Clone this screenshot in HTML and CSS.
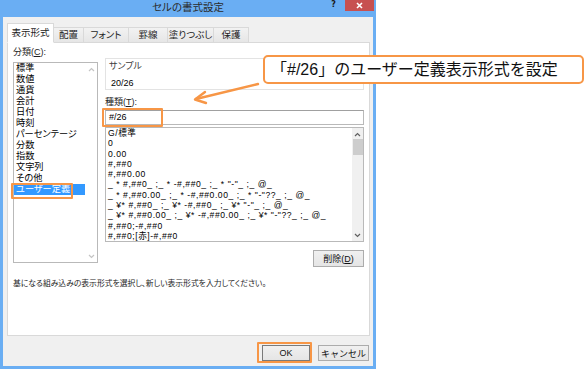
FILE: index.html
```html
<!DOCTYPE html>
<html lang="ja">
<head>
    <meta charset="UTF-8">
    <title>セルの書式設定</title>
    <link rel="stylesheet" href="styles.css">
</head>
<body>
    <div class="stage">
        <div class="window">
            <div class="titlebar">
                <span></span>
                <span class="title">セルの書式設定</span>
                <div class="controls">
                    <span class="help">?</span>
                    <span class="close">
                        <svg width="7" height="7" viewBox="0 0 7 7"><path d="M1 1L6 6M6 1L1 6" stroke="#fff" stroke-width="1.6"/></svg>
                    </span>
                </div>
            </div>

            <div class="client">
                <div class="tabs">
                    <div class="tab active">表示形式</div>
                    <div class="tab w-haichi">配置</div>
                    <div class="tab w-font">フォント</div>
                    <div class="tab w-keisen">罫線</div>
                    <div class="tab w-nuri">塗りつぶし</div>
                    <div class="tab w-hogo">保護</div>
                </div>

                <div class="panel">
                    <div class="cols">
                        <div class="left">
                            <div class="label">分類(<u>C</u>):</div>
                            <div class="listbox category">
                                <ul class="items">
                                    <li>標準</li>
                                    <li>数値</li>
                                    <li>通貨</li>
                                    <li>会計</li>
                                    <li>日付</li>
                                    <li>時刻</li>
                                    <li>パーセンテージ</li>
                                    <li>分数</li>
                                    <li>指数</li>
                                    <li>文字列</li>
                                    <li>その他</li>
                                    <li class="selected">ユーザー定義</li>
                                </ul>
                                <div class="vscroll disabled">
                                    <svg width="7" height="5" viewBox="0 0 7 5"><path d="M1 4L3.5 1.5L6 4" fill="none" stroke="#c4c4c4" stroke-width="1.2"/></svg>
                                    <svg width="7" height="5" viewBox="0 0 7 5"><path d="M1 1L3.5 3.5L6 1" fill="none" stroke="#c4c4c4" stroke-width="1.2"/></svg>
                                </div>
                            </div>
                        </div>

                        <div class="right">
                            <div class="sample">
                                <div class="sample-title">サンプル</div>
                                <div class="sample-value">20/26</div>
                            </div>
                            <div class="label">種類(<u>T</u>):</div>
                            <div class="textbox">#/26</div>
                            <div class="listbox formats">
                                <ul class="items">
                                    <li>G/標準</li>
                                    <li>0</li>
                                    <li>0.00</li>
                                    <li>#,##0</li>
                                    <li>#,##0.00</li>
                                    <li>_ * #,##0_ ;_ * -#,##0_ ;_ * "-"_ ;_ @_</li>
                                    <li>_ * #,##0.00_ ;_ * -#,##0.00_ ;_ * "-"??_ ;_ @_</li>
                                    <li>_ ¥* #,##0_ ;_ ¥* -#,##0_ ;_ ¥* "-"_ ;_ @_</li>
                                    <li>_ ¥* #,##0.00_ ;_ ¥* -#,##0.00_ ;_ ¥* "-"??_ ;_ @_</li>
                                    <li>#,##0;-#,##0</li>
                                    <li>#,##0;[赤]-#,##0</li>
                                </ul>
                                <div class="vscroll">
                                    <svg width="7" height="5" viewBox="0 0 7 5"><path d="M1 4L3.5 1.5L6 4" fill="none" stroke="#606060" stroke-width="1.2"/></svg>
                                    <div class="thumb"></div>
                                    <svg width="7" height="5" viewBox="0 0 7 5"><path d="M1 1L3.5 3.5L6 1" fill="none" stroke="#606060" stroke-width="1.2"/></svg>
                                </div>
                            </div>
                            <div class="row-end">
                                <button type="button" class="btn btn-delete">削除(<u>D</u>)</button>
                            </div>
                        </div>
                    </div>
                    <p class="desc">基になる組み込みの表示形式を選択し、新しい表示形式を入力してください。</p>
                </div>

                <div class="actions">
                    <button type="button" class="btn btn-ok">OK</button>
                    <button type="button" class="btn btn-cancel">キャンセル</button>
                </div>
            </div>
        </div>

        <!-- annotations drawn over the dialog -->
        <div class="mark mark-category"></div>
        <div class="mark mark-input"></div>
        <div class="mark mark-ok"></div>
        <svg class="pointer" width="90" height="40" viewBox="0 0 90 40">
            <path d="M78 8L16 23" fill="none" stroke="#f79646" stroke-width="2.4" stroke-linecap="round"/>
            <path d="M25 16L15 23.5L26 27" fill="none" stroke="#f79646" stroke-width="2.4" stroke-linecap="round" stroke-linejoin="round"/>
        </svg>
        <div class="callout">「#/26」のユーザー定義表示形式を設定</div>
    </div>
</body>
</html>
```

FILE: styles.css
```css
* {
    box-sizing: border-box;
}

body {
    margin: 0;
    background-color: #fff;
    font-family: "Liberation Sans", "Noto Sans CJK JP", sans-serif;
    font-feature-settings: "palt";
    color: #000;
}

.stage {
    position: relative;
    width: 586px;
    height: 371px;
    overflow: hidden;
}

/* window frame */
.window {
    width: 376px;
    height: 369px;
    background-color: #6aaef3;
    display: flex;
    flex-direction: column;
}

.titlebar {
    height: 17px;
    flex: none;
    display: grid;
    grid-template-columns: 1fr auto 1fr;
}

.title {
    font-size: 10.5px;
    line-height: 15px;
    color: #2b2b2b;
}

.controls {
    justify-self: end;
    display: flex;
    align-items: flex-start;
}

.help {
    font-family: "DejaVu Sans", sans-serif;
    font-size: 8px;
    font-weight: bold;
    line-height: 10px;
    color: #1a1a1a;
    margin-right: 9px;
}

.close {
    width: 29px;
    height: 11px;
    background-color: #c75050;
    margin-right: 2px;
    display: flex;
    align-items: center;
    justify-content: center;
}

.client {
    flex: 1;
    margin: 0 3px 3px;
    background-color: #f0f0f0;
    padding: 6px 3px 5px 4px;
    display: flex;
    flex-direction: column;
}

/* tabs */
.tabs {
    display: flex;
    align-items: flex-end;
    height: 20px;
    margin-bottom: -1px;
}

.tab {
    height: 16px;
    border: 1px solid #d9d9d9;
    margin-left: -1px;
    background: linear-gradient(#f2f2f2, #e6e6e6);
    font-size: 9.5px;
    line-height: 14px;
    text-align: center;
    color: #1e1e1e;
}

.tab.active {
    position: relative;
    z-index: 1;
    height: 20px;
    width: 47px;
    margin-left: 0;
    background: #fff;
    border-bottom-color: #fff;
    line-height: 17px;
}

.w-haichi { width: 31px; }
.w-font { width: 46px; }
.w-keisen { width: 40px; }
.w-nuri { width: 47px; }
.w-hogo { width: 36px; }

/* main panel */
.panel {
    height: 294px;
    flex: none;
    background-color: #fff;
    border: 1px solid #d9d9d9;
    padding: 4px 5px;
}

.cols {
    display: flex;
    gap: 7px;
}

.left {
    width: 85px;
}

.right {
    flex: 1;
    padding-top: 11px;
}

.label {
    font-size: 9px;
    line-height: 11px;
    color: #1e1e1e;
}

.left .label {
    margin-bottom: 4px;
}

.listbox {
    display: flex;
    border: 1px solid #b9b9b9;
    background-color: #fff;
}

.items {
    flex: 1;
    list-style: none;
    margin: 0;
    padding: 0;
    overflow: hidden;
}

.category {
    height: 201px;
}

.category li {
    font-size: 9.2px;
    line-height: 11px;
    height: 11px;
    padding-left: 2px;
    white-space: nowrap;
}

.category li.selected {
    background-color: #3399ff;
    color: #fff;
}

.vscroll {
    width: 12px;
    display: flex;
    flex-direction: column;
    align-items: center;
    justify-content: space-between;
    padding: 4px 0 3px;
    background-color: #f0f0f0;
}

.vscroll.disabled {
    background-color: #fff;
}

.thumb {
    width: 10px;
    height: 16px;
    background-color: #cdcdcd;
    margin-bottom: auto;
    margin-top: 2px;
}

.sample {
    height: 32px;
    border: 1px solid #e3e3e3;
    padding: 1px 3px 0 3px;
    margin-bottom: 7px;
}

.sample-title {
    font-size: 9px;
    line-height: 12px;
    color: #3c3c3c;
}

.sample-value {
    font-size: 9px;
    line-height: 12px;
    padding-left: 2px;
    margin-top: 5px;
}

.right .label {
    margin-bottom: 2px;
}

.textbox {
    height: 15px;
    border: 1px solid #b9b9b9;
    border-top-color: #a0a0a0;
    font-size: 9px;
    line-height: 13px;
    padding-left: 3px;
    margin-bottom: 2px;
}

.formats {
    height: 115px;
}

.formats li {
    font-size: 8.6px;
    line-height: 10.3px;
    height: 10.3px;
    padding-left: 2px;
    letter-spacing: 0.55px;
    white-space: pre;
}

.formats .vscroll {
    width: 11px;
}

.row-end {
    display: flex;
    justify-content: flex-end;
    margin-top: 8px;
}

.btn {
    font-family: inherit;
    font-size: 9px;
    color: #111;
    border: 1px solid #acacac;
    background: linear-gradient(#f0f0f0, #e5e5e5);
    padding: 0;
    margin: 0;
}

.btn-delete {
    width: 51px;
    height: 17px;
}

.desc {
    margin: 11px 0 0;
    font-size: 7.8px;
    line-height: 11px;
    color: #1e1e1e;
}

.actions {
    margin-top: 9px;
    display: flex;
    justify-content: flex-end;
    gap: 8px;
    padding-right: 1px;
}

.btn-ok {
    width: 48px;
    height: 16px;
    border-color: #7a7a7a;
}

.btn-cancel {
    width: 51px;
    height: 16px;
}

/* orange annotations */
.mark {
    position: absolute;
    border: 2px solid #f79646;
    border-radius: 1px;
}

.mark-category {
    left: 11px;
    top: 183px;
    width: 62px;
    height: 16px;
}

.mark-input {
    left: 102px;
    top: 108px;
    width: 61px;
    height: 19px;
}

.mark-ok {
    left: 257px;
    top: 342px;
    width: 55px;
    height: 21px;
}

.pointer {
    position: absolute;
    left: 180px;
    top: 76px;
}

.callout {
    position: absolute;
    left: 263px;
    top: 55px;
    width: 321px;
    height: 29px;
    border: 2px solid #f79646;
    border-radius: 5px;
    background-color: #fff;
    font-size: 16px;
    line-height: 25px;
    padding-left: 6px;
    font-feature-settings: normal;
    color: #111;
}
```
